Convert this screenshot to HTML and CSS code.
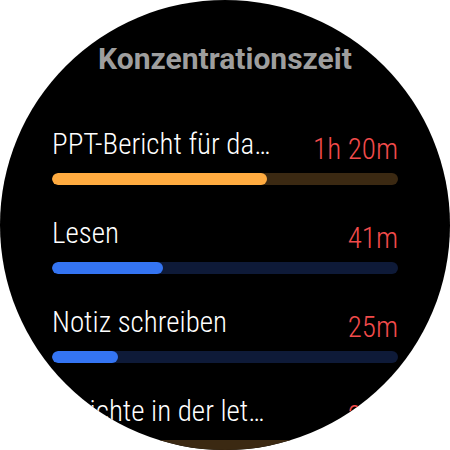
FILE: index.html
```html
<!DOCTYPE html>
<html lang="de">
<head>
<meta charset="utf-8">
<title>Konzentrationszeit</title>
<link rel="stylesheet" href="styles.css">
</head>
<body>
<div class="watch">
  <h1 class="title">Konzentrationszeit</h1>
  <div class="list">
    <div class="row">
      <div class="head">
        <span class="label">PPT-Bericht für das Quartalsmeeting</span>
        <span class="value">1h 20m</span>
      </div>
      <div class="bar bar-orange"><div class="fill" style="width:62%"></div></div>
    </div>
    <div class="row">
      <div class="head">
        <span class="label">Lesen</span>
        <span class="value">41m</span>
      </div>
      <div class="bar bar-blue"><div class="fill" style="width:32%"></div></div>
    </div>
    <div class="row">
      <div class="head">
        <span class="label">Notiz schreiben</span>
        <span class="value">25m</span>
      </div>
      <div class="bar bar-blue"><div class="fill" style="width:19%"></div></div>
    </div>
    <div class="row">
      <div class="head">
        <span class="label">Berichte in der letzten Woche</span>
        <span class="value">21m</span>
      </div>
      <div class="bar bar-orange"><div class="fill" style="width:20%"></div></div>
    </div>
  </div>
</div>
</body>
</html>
```
FILE: styles.css
```css
html, body {
  margin: 0;
  padding: 0;
  background: #ffffff;
}

.watch {
  width: 450px;
  height: 450px;
  border-radius: 50%;
  background: #000000;
  overflow: hidden;
  box-sizing: border-box;
  padding: 42px 52px 0 52px;
  font-family: Roboto, "Noto Sans", sans-serif;
}

.title {
  margin: 0;
  text-align: center;
  font-size: 30px;
  line-height: 34px;
  font-weight: 700;
  color: #9e9e9e;
}

.list {
  display: flex;
  flex-direction: column;
  gap: 31px;
  margin-top: 51px;
}

.row {
  display: flex;
  flex-direction: column;
}

.head {
  display: flex;
  align-items: flex-end;
  justify-content: space-between;
  height: 34px;
  margin-bottom: 12px;
}

.label,
.value {
  font-family: "Roboto Condensed", Roboto, sans-serif;
  font-stretch: condensed;
  font-size: 29px;
  font-weight: 260;
}

.label {
  flex: 0 1 auto;
  max-width: 220px;
  min-width: 0;
  overflow: hidden;
  white-space: nowrap;
  text-overflow: ellipsis;
  line-height: 34px;
  color: #ffffff;
}

.value {
  flex: none;
  line-height: 24px;
  color: #f24b4b;
}

.bar {
  height: 12px;
  border-radius: 6px;
  overflow: hidden;
}

.bar .fill {
  height: 100%;
  border-radius: 6px;
}

.bar-orange {
  background: #3b2912;
}

.bar-orange .fill {
  background: #ffab40;
}

.bar-blue {
  background: #0e1a38;
}

.bar-blue .fill {
  background: #3474f2;
}
```
